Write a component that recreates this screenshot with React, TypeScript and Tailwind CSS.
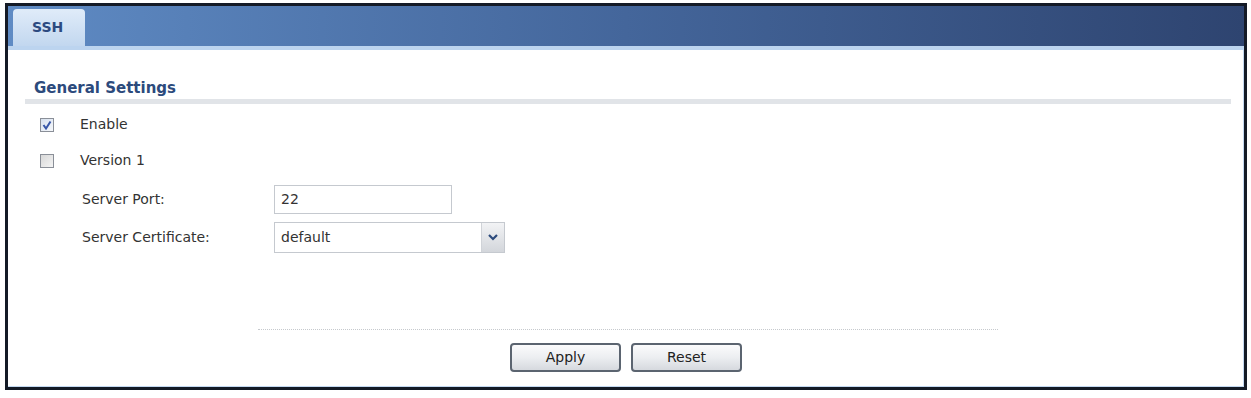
export default function App() {
  return (
    <div className="w-[1251px] h-[398px] bg-white pt-[3px] pl-[5px] font-['DejaVu_Sans',Verdana,sans-serif] text-[14px] text-[#333]">
      <div className="w-[1242px] h-[387px] border-[3px] border-[#141a26] flex flex-col">
        {/* header with tab */}
        <div className="h-[40px] flex items-end pl-[5px] bg-gradient-to-r from-[#5f8bc4] via-[#44669b] to-[#2e4470]">
          <div className="w-[72px] h-[37px] rounded-t-[4px] bg-gradient-to-b from-[#e0ecf9] to-[#c2d7ef] flex items-center pl-[19px] font-bold text-[14px] text-[#2c4a80]">
            SSH
          </div>
        </div>
        <div className="h-[4px] bg-[#bcd4ef]" />
        <div className="flex-1 flex flex-col pl-[17px] pr-[12px] border-r border-b border-[#c4d9f1]">
          <div className="mt-[30px] pl-[9px] font-bold text-[15px] text-[#2c4a7c] leading-[16px]">
            General Settings
          </div>
          <div className="mt-[3px] h-[5px] bg-[#e1e4e8]" />
          <div className="mt-[14px] pl-[15px] flex flex-col gap-[23px]">
            <label className="flex items-center h-[13px]">
              <span className="w-[14px] h-[14px] border border-[#8a8f98] bg-gradient-to-br from-[#d6e0ee] to-[#f6f8fb] flex items-center justify-center">
                <svg width="10" height="10" viewBox="0 0 10 10">
                  <path d="M1.5 5 L4 8.5 L8.5 1.5" fill="none" stroke="#3756a8" strokeWidth="2" />
                </svg>
              </span>
              <span className="ml-[26px]">Enable</span>
            </label>
            <label className="flex items-center h-[13px]">
              <span className="w-[14px] h-[14px] border border-[#8a8f98] bg-gradient-to-br from-[#d8d8d8] to-[#f4f4f4]" />
              <span className="ml-[26px]">Version 1</span>
            </label>
          </div>
          <div className="mt-[18px] pl-[57px] flex flex-col gap-[8px]">
            <div className="flex items-center">
              <span className="w-[192px]">Server Port:</span>
              <div className="w-[178px] h-[29px] border border-[#c5c9cf] bg-white flex items-center px-[6px]">
                22
              </div>
            </div>
            <div className="flex items-center">
              <span className="w-[192px]">Server Certificate:</span>
              <div className="w-[231px] h-[31px] border border-[#c5c9cf] bg-white flex items-center">
                <span className="flex-1 px-[6px]">default</span>
                <span className="w-[23px] h-full border-l border-[#d0d3d8] bg-gradient-to-b from-[#f2f3f5] to-[#d3d6db] flex items-center justify-center">
                  <svg width="10" height="7" viewBox="0 0 10 7">
                    <path d="M1 1 L5 5 L9 1" fill="none" stroke="#2c4a7c" strokeWidth="2.2" />
                  </svg>
                </span>
              </div>
            </div>
          </div>
          <div className="mt-[76px] ml-[233px] w-[740px] border-t border-dotted border-[#c6c9cd]" />
          <div className="mt-[13px] flex justify-center gap-[10px] pr-[4px]">
            <button className="w-[111px] h-[29px] rounded-[4px] border-2 border-[#5b6470] bg-gradient-to-b from-[#fbfbfc] via-[#eceef1] to-[#d6d9de] text-[14px] text-[#222]">
              Apply
            </button>
            <button className="w-[111px] h-[29px] rounded-[4px] border-2 border-[#5b6470] bg-gradient-to-b from-[#fbfbfc] via-[#eceef1] to-[#d6d9de] text-[14px] text-[#222]">
              Reset
            </button>
          </div>
        </div>
      </div>
    </div>
  );
}
